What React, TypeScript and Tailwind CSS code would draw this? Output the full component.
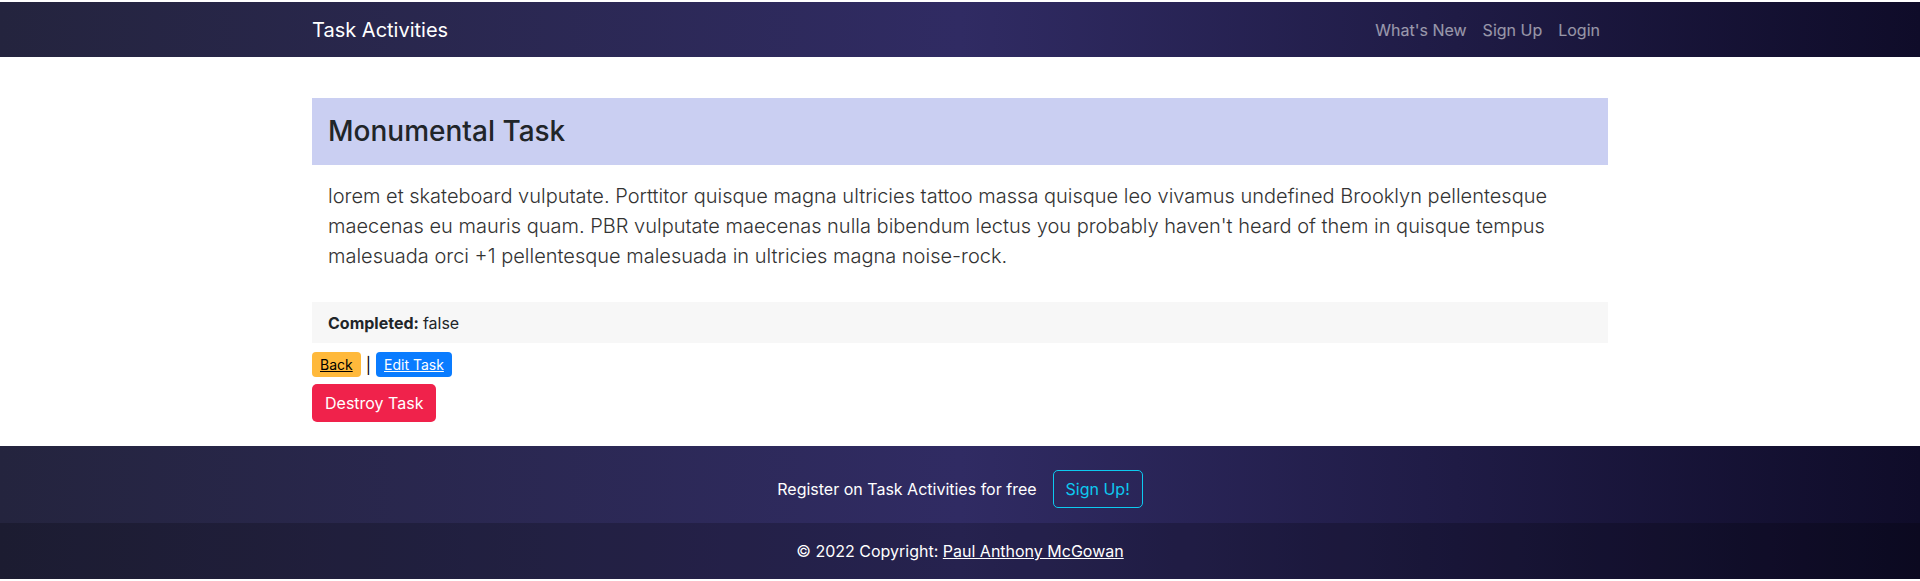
const navLinks = ["What's New", 'Sign Up', 'Login'];

const gradient = 'bg-[linear-gradient(to_right,#24243e,#302b63,#0f0c29)]';

function Navbar() {
  return (
    <nav className={`${gradient} h-[55px]`}>
      <div className="mx-auto flex h-full max-w-[1320px] items-center justify-between px-3">
        <a className="text-[20px] text-white">Task Activities</a>
        <ul className="flex">
          {navLinks.map((l) => (
            <li key={l}>
              <a className="px-2 text-base text-white/55">{l}</a>
            </li>
          ))}
        </ul>
      </div>
    </nav>
  );
}

function Footer() {
  return (
    <footer className={`${gradient} mt-6 text-center text-white`}>
      <section className="flex items-center justify-center pt-6 pb-[15px]">
        <span className="mr-4">Register on Task Activities for free</span>
        <a className="flex h-[38px] items-center rounded-[5px] border border-[#0dcaf0] px-3 text-[#0dcaf0]">
          Sign Up!
        </a>
      </section>
      <div className="bg-black/20 p-4 leading-6">
        © 2022 Copyright:{' '}
        <a className="underline">Paul Anthony McGowan</a>
      </div>
    </footer>
  );
}

export default function App() {
  return (
    <div className="bg-white pt-[2px] pb-[2px] font-['Inter',sans-serif] text-[#212529]">
      <Navbar />
      <main className="mx-auto max-w-[1320px] px-3 pt-[41px]">
        <div className="flex h-[67px] items-center bg-[#cacff2] px-4">
          <h3 className="text-[28px] leading-[1.2] font-medium">Monumental Task</h3>
        </div>
        <p className="mt-4 mb-[31px] px-4 text-[20px] leading-[30px] font-light text-[#333]">
          lorem et skateboard vulputate. Porttitor quisque magna ultricies tattoo massa quisque leo
          vivamus undefined Brooklyn pellentesque maecenas eu mauris quam. PBR vulputate maecenas
          nulla bibendum lectus you probably haven't heard of them in quisque tempus malesuada orci
          +1 pellentesque malesuada in ultricies magna noise-rock.
        </p>
        <div className="flex h-[41px] items-center bg-[#f7f7f7] px-4">
          <strong className="font-bold">Completed:</strong>
          <span className="ml-1">false</span>
        </div>
        <div className="mt-[9px] flex items-center">
          <a className="flex h-[25px] items-center rounded-[4px] bg-[#ffb93b] px-2 text-sm text-black underline">
            Back
          </a>
          <span className="mx-[5px] text-black">|</span>
          <a className="flex h-[25px] items-center rounded-[4px] bg-[#0a7cff] px-2 text-sm text-white underline">
            Edit Task
          </a>
        </div>
        <button className="mt-[7px] flex h-[38px] items-center rounded-[5px] bg-[#f0224b] px-[13px] text-base text-white">
          Destroy Task
        </button>
      </main>
      <Footer />
    </div>
  );
}
